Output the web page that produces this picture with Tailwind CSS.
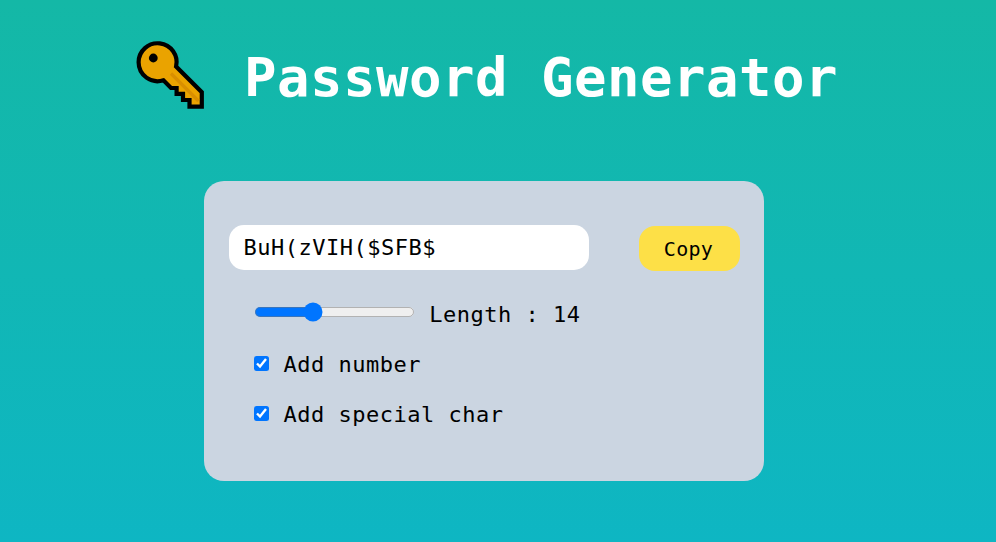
<!DOCTYPE html>
<html lang="en">
<head>
<meta charset="utf-8">
<title>Password Generator</title>
<script src="https://cdn.jsdelivr.net/npm/@tailwindcss/browser@4"></script>
</head>
<body class="h-[542px] overflow-hidden bg-linear-to-b/srgb from-[#14b8a6] to-[#0eb6c3] font-['Consolas','DejaVu_Sans_Mono',monospace] text-black">
<header class="flex h-[181px] items-start pt-[38px] pl-[134px]">
  <svg class="h-[74px] w-[74px] shrink-0" viewBox="0 0 74 74">
    <path d="M4.600 24.300a19 19 0 1 1 37.500 4.300L67.800 54.200V68.700H55.500V62H49V55.900H42.600V50H37L29.500 42.300A19 19 0 0 1 4.600 24.300Z" fill="#eaa300" stroke="#000" stroke-width="4.200"/>
    <path d="M37 35.500L64.500 63" stroke="#d98f00" stroke-width="3.200" fill="none"/>
    <circle cx="19.300" cy="20" r="4.400"/>
  </svg>
  <h1 class="ml-[36px] pt-[10px] text-[54px] leading-[60px] font-bold tracking-[0.490px] whitespace-nowrap text-white">Password Generator</h1>
</header>
<main class="ml-[204px] h-[300px] w-[560px] rounded-[20px] bg-[#cbd5e1] px-[25px] pt-[44px]">
  <div class="flex gap-[50px]">
    <input type="text" readonly value="BuH(zVIH($SFB$" class="h-[45px] w-[360px] shrink-0 rounded-[15px] bg-white px-[14.500px] text-[22px] tracking-[0.500px]">
    <button class="mt-px h-[45px] w-[101px] shrink-0 rounded-[16px] bg-[#fde047] pr-[2px] text-[20px] tracking-[0.300px]">Copy</button>
  </div>
  <div class="mt-[18px] ml-[25px] text-[22px] tracking-[0.500px]">
    <div class="flex h-[50px] items-center">
      <input type="range" min="0" max="40" value="14" class="mb-[3px] h-[16px] w-[129px] [zoom:1.25]">
      <label class="ml-[14px]">Length : 14</label>
    </div>
    <label class="flex h-[50px] items-center"><input type="checkbox" checked class="mb-px h-[12px] w-[12px] [zoom:1.25]"><span class="ml-[14.500px]">Add number</span></label>
    <label class="flex h-[50px] items-center"><input type="checkbox" checked class="mb-px h-[12px] w-[12px] [zoom:1.25]"><span class="ml-[14.500px]">Add special char</span></label>
  </div>
</main>
</body>
</html>
